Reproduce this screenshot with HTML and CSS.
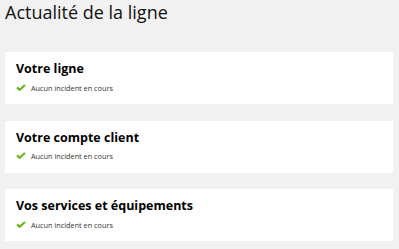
FILE: index.html
```html
<!DOCTYPE html>
<html lang="fr">
<head>
    <meta charset="UTF-8">
    <title>Actualité de la ligne</title>
    <link rel="stylesheet" href="styles.css">
</head>
<body>
    <h1 class="page-title">Actualité de la ligne</h1>
    <div class="status-list">
        <div class="status-card">
            <h2>Votre ligne</h2>
            <p class="status-ok">
                <svg class="check" viewBox="0 0 10 7" width="10" height="7"><path d="M1 3.4 L3.6 5.8 L9 1" fill="none" stroke="#6cb41c" stroke-width="2.2"/></svg>
                Aucun incident en cours
            </p>
        </div>
        <div class="status-card">
            <h2>Votre compte client</h2>
            <p class="status-ok">
                <svg class="check" viewBox="0 0 10 7" width="10" height="7"><path d="M1 3.4 L3.6 5.8 L9 1" fill="none" stroke="#6cb41c" stroke-width="2.2"/></svg>
                Aucun incident en cours
            </p>
        </div>
        <div class="status-card">
            <h2>Vos services et équipements</h2>
            <p class="status-ok">
                <svg class="check" viewBox="0 0 10 7" width="10" height="7"><path d="M1 3.4 L3.6 5.8 L9 1" fill="none" stroke="#6cb41c" stroke-width="2.2"/></svg>
                Aucun incident en cours
            </p>
        </div>
    </div>
</body>
</html>
```

FILE: styles.css
```css
body {
    margin: 0;
    padding: 0 6px 0 5px;
    background-color: #f1f1f1;
    font-family: "Open Sans", Arial, sans-serif;
    color: #111;
}
.page-title {
    margin: 0;
    font-size: 18px;
    font-weight: normal;
    line-height: 24px;
    color: #111;
}
.status-list {
    display: flex;
    flex-direction: column;
    gap: 16.5px;
    margin-top: 28px;
}
.status-card {
    background: #ffffff;
    height: 52px;
    box-sizing: border-box;
    padding: 9px 11px 0;
}
.status-card h2 {
    margin: 0;
    font-size: 12.5px;
    font-weight: bold;
    line-height: 16px;
    color: #000;
}
.status-ok {
    display: flex;
    align-items: center;
    gap: 5px;
    margin: 6.5px 0 0;
    font-size: 7.3px;
    line-height: 8px;
    color: #333;
}
.check {
    display: block;
    margin-top: -1px;
}
```
